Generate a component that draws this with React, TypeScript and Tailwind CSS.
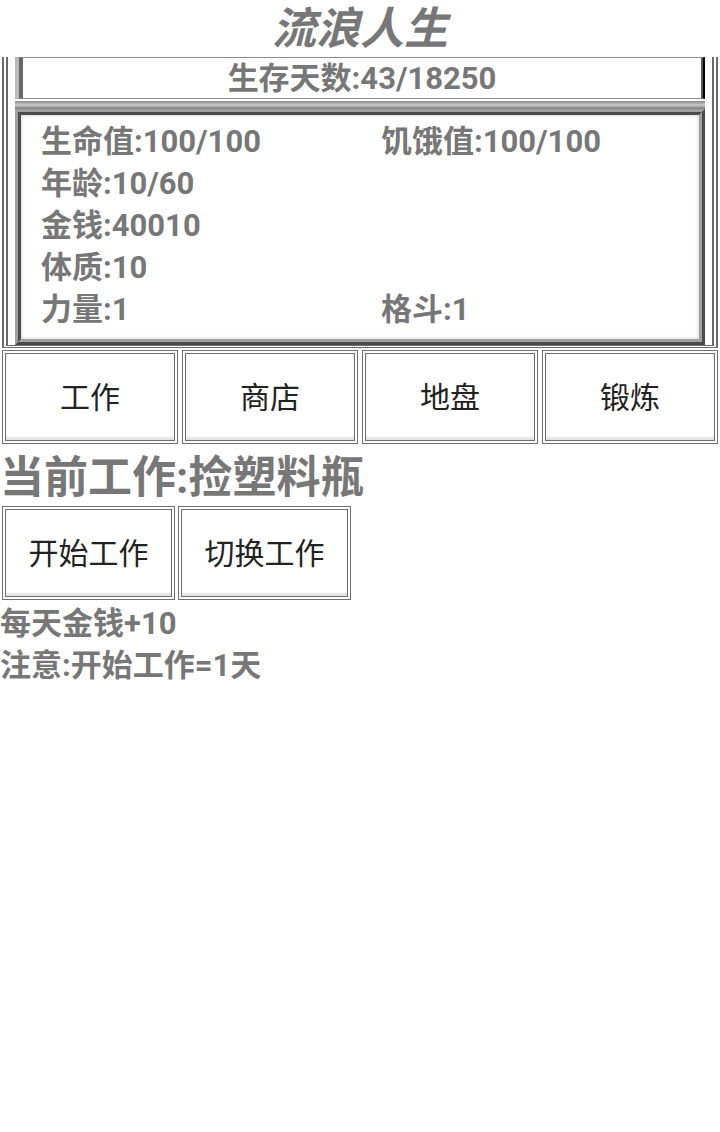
import React from 'react';

const FONT = { fontFamily: 'Roboto, "Noto Sans CJK SC", sans-serif' };

const stats: [string, string][] = [
  ['生命值:100/100', '饥饿值:100/100'],
  ['年龄:10/60', ''],
  ['金钱:40010', ''],
  ['体质:10', ''],
  ['力量:1', '格斗:1'],
];

const navItems = ['工作', '商店', '地盘', '锻炼'];

const Btn: React.FC<{ label: string; className?: string }> = ({ label, className }) => (
  <button
    className={`flex items-center justify-center bg-white border-[4px] border-double border-[#6f6f6f] text-[30px] text-[#222] shadow-[inset_0_-3px_2px_#e4e4e4] ${className ?? ''}`}
  >
    {label}
  </button>
);

export default function App() {
  return (
    <div className="w-[720px] min-h-[1132px] bg-white" style={FONT}>
      {/* title */}
      <div className="h-[57px] flex items-center justify-center">
        <h1 className="text-[44px] font-bold italic text-[#777] leading-none">流浪人生</h1>
      </div>

      {/* frame */}
      <div className="mx-[2px] border-x-[6px] border-b-[3px] border-double border-[#6a6a6a] px-[7px]">
        <div className="h-[42px] pt-[3px] flex items-center justify-center border-y border-[#8a8a8a] border-l-[8px] border-r-[4px] [border-left-style:ridge] [border-right-style:ridge] border-l-[#bbb] border-r-[#555]">
          <span className="text-[31px] font-bold text-[#777]">生存天数:43/18250</span>
        </div>
        <div className="mt-[2px] h-[8px] bg-gradient-to-b from-[#8a8a8a] via-[#c9c9c9] to-[#777]" />
        <div className="border-[6px] [border-style:ridge] border-[#a0a0a0] pl-[20px] pt-[6px] pb-[8px] shadow-[inset_0_0_4px_#ccc]">
          <div className="grid grid-cols-[340px_1fr]">
            {stats.map(([a, b], i) => (
              <React.Fragment key={i}>
                <div className="h-[42px] flex items-center text-[31px] font-bold text-[#777]">{a}</div>
                <div className="h-[42px] flex items-center text-[31px] font-bold text-[#777]">{b}</div>
              </React.Fragment>
            ))}
          </div>
        </div>
      </div>

      {/* nav */}
      <div className="grid grid-cols-4 gap-[4px] px-[2px] mt-[2px]">
        {navItems.map((n) => (
          <Btn key={n} label={n} className="h-[94px]" />
        ))}
      </div>

      {/* current job */}
      <div className="h-[62px] pt-[5px] flex items-center">
        <h2 className="text-[44px] font-bold text-[#777] leading-none">当前工作:捡塑料瓶</h2>
      </div>
      <div className="flex gap-[3px] px-[2px]">
        <Btn label="开始工作" className="w-[173px] h-[94px]" />
        <Btn label="切换工作" className="w-[173px] h-[94px]" />
      </div>
      <div className="h-[42px] mt-[3px] flex items-center text-[31px] font-bold text-[#777]">每天金钱+10</div>
      <div className="h-[42px] flex items-center text-[31px] font-bold text-[#777]">注意:开始工作=1天</div>
    </div>
  );
}
